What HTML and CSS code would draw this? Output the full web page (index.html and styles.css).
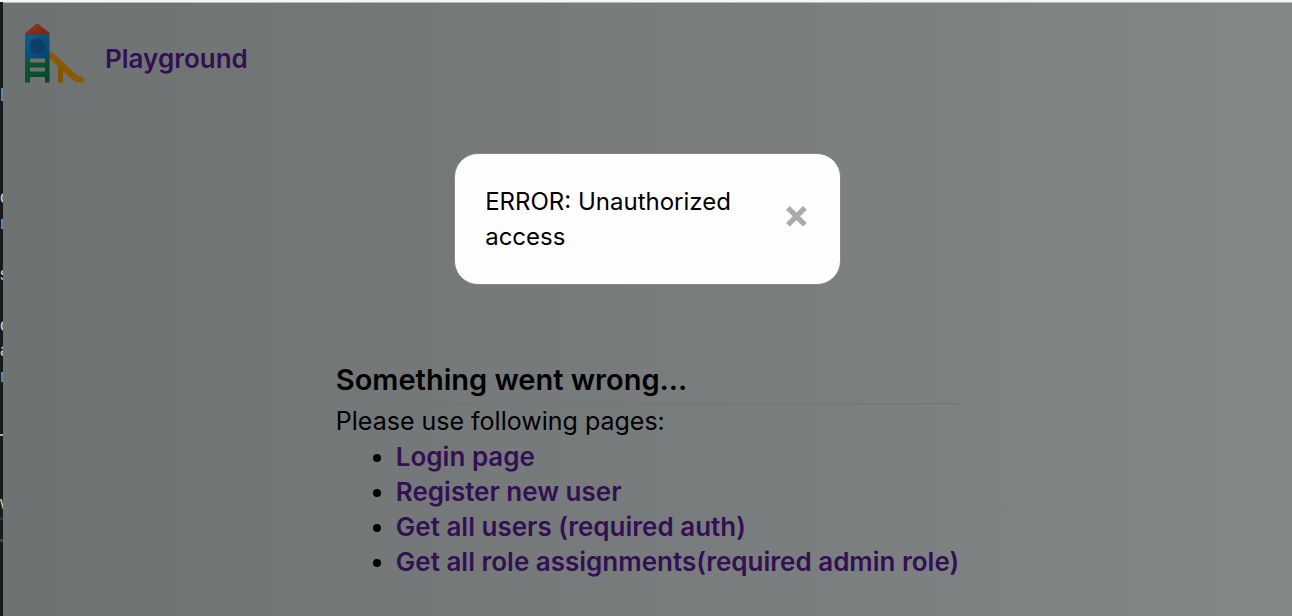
FILE: index.html
```html
<!DOCTYPE html>
<html lang="en">
<head>
<meta charset="utf-8">
<title>Playground</title>
<link rel="stylesheet" href="styles.css">
</head>
<body>
<div class="window">
  <aside class="editor" aria-hidden="true">
    <svg class="editor-code" width="3" height="613">
      <g class="code-text">
        <text class="tag" x="0" y="99">h</text>
        <text x="0" y="201">c</text>
        <text class="tag" x="0" y="227">r</text>
        <text x="0" y="278">s</text>
        <text x="0" y="329">c</text>
        <text x="0" y="354">a</text>
        <text class="tag" x="0" y="380">r</text>
        <text class="word" x="0" y="507">w</text>
      </g>
      <rect x="0" y="432" width="3" height="2" fill="#b0b0b0"/>
      <rect x="0" y="515" width="3" height="3" fill="#333"/>
      <rect x="0" y="537" width="3" height="3" fill="#444"/>
    </svg>
  </aside>
  <div class="page">
    <header class="header">
      <svg class="logo" viewBox="0 0 60 60" aria-hidden="true">
        <defs>
          <linearGradient id="wall" x1="0" y1="0" x2="1" y2="1"><stop offset="0" stop-color="#13a1ef"/><stop offset="1" stop-color="#0a70be"/></linearGradient>
          <linearGradient id="roof" x1="0" y1="0" x2="1" y2="1"><stop offset="0" stop-color="#ef5a38"/><stop offset="1" stop-color="#c83d22"/></linearGradient>
          <linearGradient id="ladder" x1="0" y1="0" x2="1" y2="1"><stop offset="0" stop-color="#189a5a"/><stop offset="1" stop-color="#087044"/></linearGradient>
        </defs>
        <path d="M33 41h5v17q0 2-2 2h-1q-2 0-2-2z" fill="#d98c0c"/>
        <path d="M24 32Q25 28 28 30L53 53H55Q59 54 59 58V59.500H53Q51 59.500 49 58L24 35z" fill="#e89500"/>
        <path d="M0 34h24.500v25.500h-4.500v-5.500h-15v5.500H0zM5 35.500v4h15v-4zM5 44.500v4h15v-4z" fill="url(#ladder)" fill-rule="evenodd"/>
        <path d="M0 11h24.500v24H0z" fill="url(#wall)"/>
        <circle cx="12.250" cy="23" r="7.500" fill="#1c64ad"/>
        <path d="M1 11.500Q0 11 1 9.500L10.500 1.500Q12.250 0 14 1.500L24 9.500Q25 11 24 11.500z" fill="url(#roof)"/>
      </svg>
      <a class="brand" href="#">Playground</a>
    </header>
    <main class="content">
      <h1>Something went wrong...</h1>
      <p>Please use following pages:</p>
      <ul>
        <li><a href="#">Login page</a></li>
        <li><a href="#">Register new user</a></li>
        <li><a href="#">Get all users (required auth)</a></li>
        <li><a href="#">Get all role assignments(required admin role)</a></li>
      </ul>
    </main>
    <div class="overlay">
      <div class="modal" role="alertdialog" aria-labelledby="message">
        <p id="message">ERROR: Unauthorized access</p>
        <button class="close" type="button" aria-label="Close">&times;</button>
      </div>
    </div>
  </div>
</div>
</body>
</html>
```
FILE: styles.css
```css
* {
  box-sizing: border-box;
}

body {
  margin: 0;
  font-family: Inter, "Open Sans", sans-serif;
  font-size: 25px;
  line-height: 35px;
  color: #000;
}

h1, p, ul {
  margin: 0;
}

.window {
  display: flex;
  min-height: 100vh;
  border-top: 2px solid #f5f5f5;
}

.editor {
  flex: none;
  width: 3px;
  overflow: hidden;
  background: #1a1a1a;
}

.editor-code {
  display: block;
}

.code-text {
  font-family: "Liberation Sans", sans-serif;
  font-size: 18px;
  fill: #c8d4dc;
}

.code-text .tag {
  fill: #68a0d8;
}

.code-text .word {
  fill: #dcdcaa;
}

.page {
  position: relative;
  flex: 1;
  border-top: 1px solid #b8baba;
  background: linear-gradient(to right, #b9bebe, #dae0e1);
}

.header {
  display: flex;
  align-items: center;
  gap: 20px;
  padding: 20px 22px;
}

.logo {
  width: 60px;
  height: 60px;
}

a {
  color: #551a8b;
  font-size: 26px;
  font-weight: 600;
  line-height: 35px;
  text-decoration: none;
}

.header .brand {
  padding-top: 10px;
}

.content {
  width: fit-content;
  margin: 256px auto 36px;
}

h1 {
  padding-bottom: 2px;
  border-bottom: 1px solid #bfc4c4;
  font-size: 29px;
  font-weight: 600;
  line-height: 42px;
}

ul {
  padding-left: 60px;
}

li {
  height: 35px;
}

.overlay {
  position: absolute;
  inset: 0;
  padding-top: 150px;
  background: rgba(0, 0, 0, 0.4);
}

.modal {
  display: flex;
  align-items: center;
  justify-content: space-between;
  width: 30%;
  margin: 0 auto;
  padding: 30px;
  border: 1px solid #888;
  border-radius: 24px;
  background: #fefefe;
}

.modal p {
  max-width: 260px;
  font-size: 24px;
}

.close {
  padding: 0 0 12px;
  border: 0;
  background: none;
  color: #aaa;
  font: bold 40px/35px Inter, sans-serif;
  cursor: pointer;
}
```
